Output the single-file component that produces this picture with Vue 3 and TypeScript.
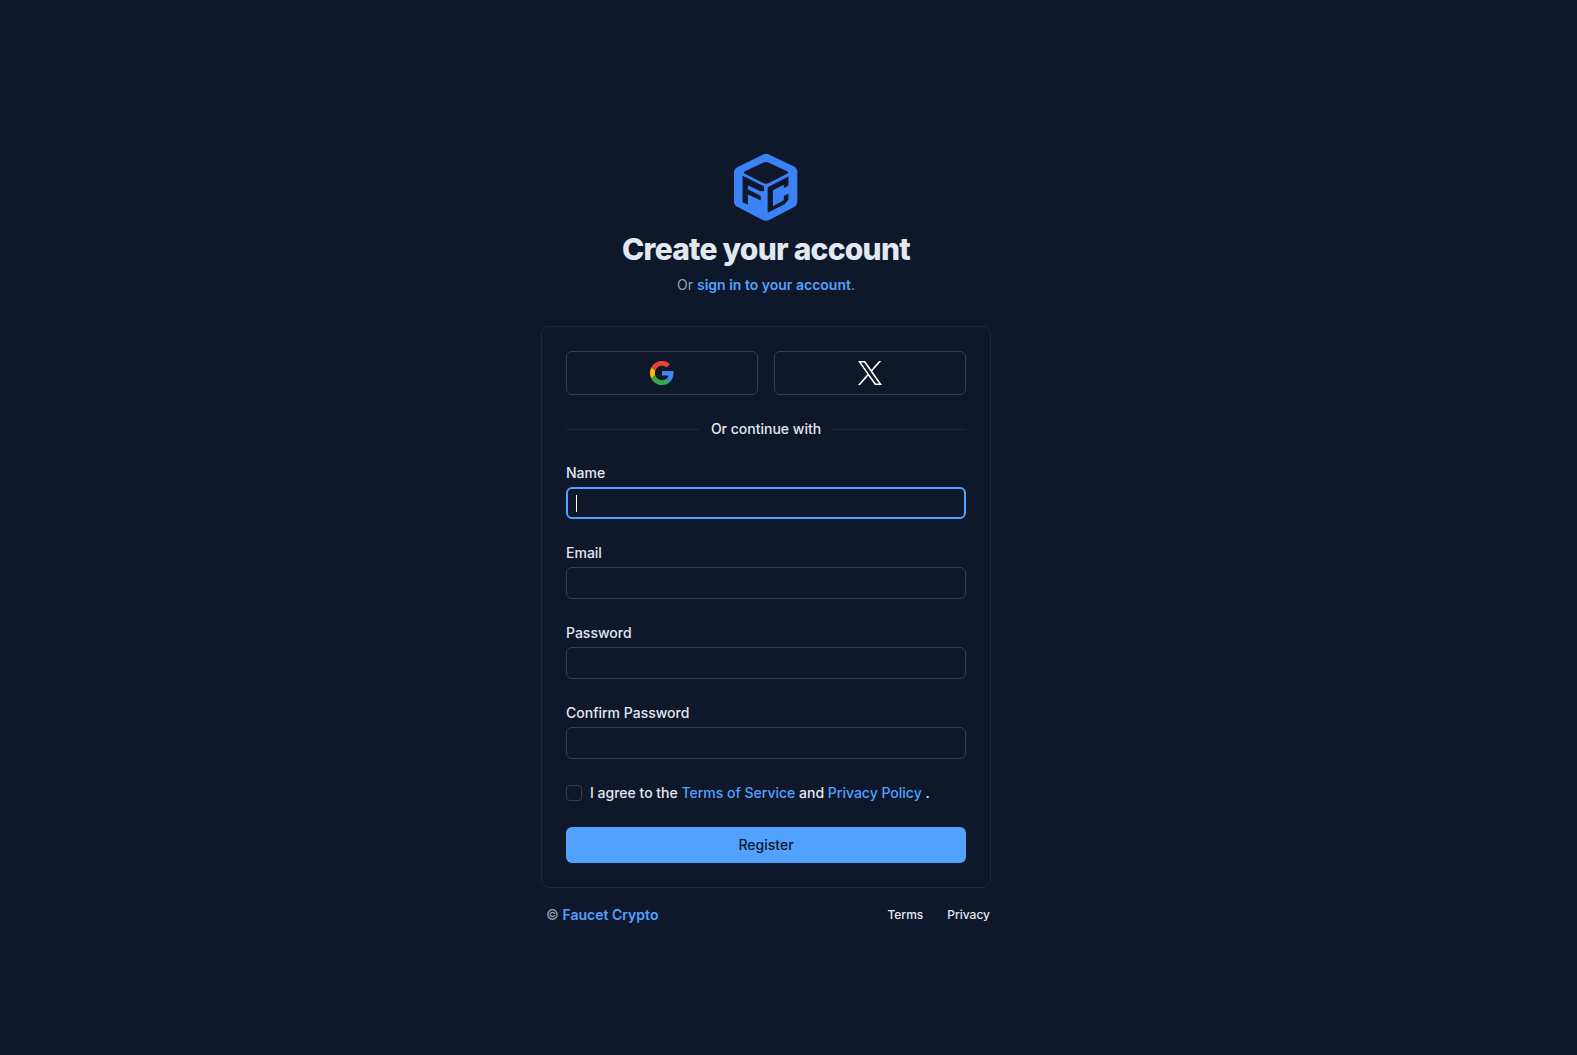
<script setup lang="ts">
import { reactive } from 'vue'

type FieldId = 'name' | 'email' | 'password' | 'confirm'

interface Field {
  id: FieldId
  label: string
  type: string
}

const fields: Field[] = [
  { id: 'name', label: 'Name', type: 'text' },
  { id: 'email', label: 'Email', type: 'email' },
  { id: 'password', label: 'Password', type: 'password' },
  { id: 'confirm', label: 'Confirm Password', type: 'password' },
]

const form = reactive({ name: '', email: '', password: '', confirm: '', agree: false })
</script>

<template>
  <div class="page">
    <main class="column">
      <header class="intro">
        <svg class="logo" viewBox="-1 -2 194 206" aria-hidden="true">
          <path
            fill="#3b82f6"
            fill-rule="evenodd"
            d="M86 3Q96-2 106 3L181 39Q191 45 191 56V145Q191 156 181 162L106 201Q96 206 86 201L10 162Q-1 156-1 145V57Q-1 46 10 40Z
               M89 27L32 53Q25 57 32 61L87 89Q96 94 105 89L160 61Q167 57 160 53L103 27Q96 24 89 27Z
               M25 67V147L41 155V124L65 134L80 142V128L41 108V96L79 114L90 113V99Z
               M164 69L101 102V179L152 153L164 140V121L150 128V141L117 159V111L150 94V104L164 97Z"
          />
        </svg>
        <h1>Create your account</h1>
        <p class="subtitle">Or <a href="#" class="strong-link">sign in to your account</a>.</p>
      </header>

      <form class="card" @submit.prevent>
        <div class="providers">
          <button type="button" class="provider" aria-label="Continue with Google">
            <svg viewBox="0 0 48 48" aria-hidden="true">
              <path fill="#ea4335" d="M24 9.5c3.54 0 6.71 1.22 9.21 3.6l6.85-6.85C35.9 2.38 30.47 0 24 0 14.62 0 6.51 5.38 2.56 13.22l7.98 6.19C12.43 13.72 17.74 9.5 24 9.5z" />
              <path fill="#4285f4" d="M46.98 24.55c0-1.57-.15-3.09-.38-4.55H24v9.02h12.94c-.58 2.96-2.26 5.48-4.78 7.18l7.73 6c4.51-4.18 7.09-10.36 7.09-17.65z" />
              <path fill="#fbbc05" d="M10.53 28.59c-.48-1.45-.76-2.99-.76-4.59s.27-3.14.76-4.59l-7.98-6.19C.92 16.46 0 20.12 0 24c0 3.88.92 7.54 2.56 10.78l7.97-6.19z" />
              <path fill="#34a853" d="M24 48c6.48 0 11.93-2.13 15.89-5.81l-7.73-6c-2.15 1.45-4.92 2.3-8.16 2.3-6.26 0-11.57-4.22-13.47-9.91l-7.98 6.19C6.51 42.62 14.62 48 24 48z" />
            </svg>
          </button>
          <button type="button" class="provider" aria-label="Continue with X">
            <svg viewBox="1 1 22 22" aria-hidden="true">
              <path fill="#fff" d="M14.095 10.316L22.286 1h-1.94l-7.116 8.088L7.551 1H1l8.589 12.231L1 23h1.941l7.509-8.543L16.449 23H23L14.095 10.316zM11.437 13.338l-.872-1.219-6.924-9.688h2.981l5.59 7.822.868 1.219 7.265 10.166h-2.981l-5.927-8.3z" />
            </svg>
          </button>
        </div>

        <div class="divider"><span>Or continue with</span></div>

        <div v-for="field in fields" :key="field.id" class="field">
          <label :for="field.id">{{ field.label }}</label>
          <div class="control">
            <input
              :id="field.id"
              v-model="form[field.id]"
              :type="field.type"
              :class="{ active: field.id === 'name' }"
            />
            <span v-if="field.id === 'name' && !form.name" class="caret" aria-hidden="true"></span>
          </div>
        </div>

        <div class="agree">
          <input id="agree" v-model="form.agree" type="checkbox" />
          <label for="agree">
            I agree to the <a href="#">Terms of Service</a> and <a href="#">Privacy Policy</a> .
          </label>
        </div>

        <button type="submit" class="register">Register</button>
      </form>

      <footer class="footer">
        <p>© <a href="#" class="strong-link">Faucet Crypto</a></p>
        <nav>
          <a href="#">Terms</a>
          <a href="#">Privacy</a>
        </nav>
      </footer>
    </main>
  </div>
</template>

<style>
body {
  background: #0f172a;
}
</style>

<style scoped>
.page,
.page * {
  box-sizing: border-box;
}

.page {
  display: flex;
  justify-content: center;
  min-height: 100vh;
  padding: 153px 45px 24px 0;
  background: #0f172a;
  color: #e2e8f0;
  font: 500 14px/20px Inter, sans-serif;
}

.column {
  width: 100%;
  max-width: 450px;
}

.intro {
  display: flex;
  flex-direction: column;
  align-items: center;
}

.logo {
  width: 64px;
  height: 68px;
}

h1 {
  margin: 10px 0 0;
  font-size: 30px;
  line-height: 36px;
  font-weight: 800;
  letter-spacing: -0.025em;
}

p {
  margin: 0;
}

a {
  color: #51a2ff;
  text-decoration: none;
}

.subtitle {
  margin: 8px 0 31px;
  color: #90a1b9;
  font-weight: 400;
}

.strong-link {
  font-weight: 600;
}

.card {
  display: flex;
  flex-direction: column;
  gap: 24px;
  padding: 24px;
  border: 1px solid #1d293d;
  border-radius: 8px;
}

.providers {
  display: flex;
  gap: 16px;
}

.provider {
  display: flex;
  flex: 1;
  align-items: center;
  justify-content: center;
  height: 44px;
  padding: 0;
  border: 1px solid #314158;
  border-radius: 6px;
  background: transparent;
}

.provider svg {
  width: 24px;
  height: 24px;
}

.divider {
  display: flex;
  align-items: center;
  gap: 12px;
}

.divider::before,
.divider::after {
  content: '';
  flex: 1;
  height: 1px;
  background: #1d293d;
}

.field {
  display: flex;
  flex-direction: column;
  gap: 4px;
}

.control {
  position: relative;
  display: flex;
}

.control input {
  width: 100%;
  height: 32px;
  padding: 0 10px;
  border: 1px solid #314158;
  border-radius: 6px;
  outline: none;
  background: transparent;
  color: inherit;
  font: inherit;
}

.control input.active {
  border: 2px solid #51a2ff;
  caret-color: transparent;
}

.caret {
  position: absolute;
  top: 8px;
  left: 10px;
  width: 1px;
  height: 17px;
  background: #fff;
}

.agree {
  display: flex;
  align-items: center;
  gap: 8px;
}

.agree input {
  appearance: none;
  width: 16px;
  height: 16px;
  margin: 0;
  border: 1px solid #314158;
  border-radius: 4px;
}

.agree input:checked {
  background: #51a2ff;
}

.register {
  height: 36px;
  border: 0;
  border-radius: 6px;
  background: #51a2ff;
  color: #0f172a;
  font: inherit;
}

.footer {
  display: flex;
  align-items: center;
  justify-content: space-between;
  margin-top: 17px;
  padding: 0 1px 0 5px;
  color: #90a1b9;
}

.footer nav {
  display: flex;
  gap: 24px;
  font-size: 12px;
}

.footer nav a {
  color: #e2e8f0;
}
</style>
